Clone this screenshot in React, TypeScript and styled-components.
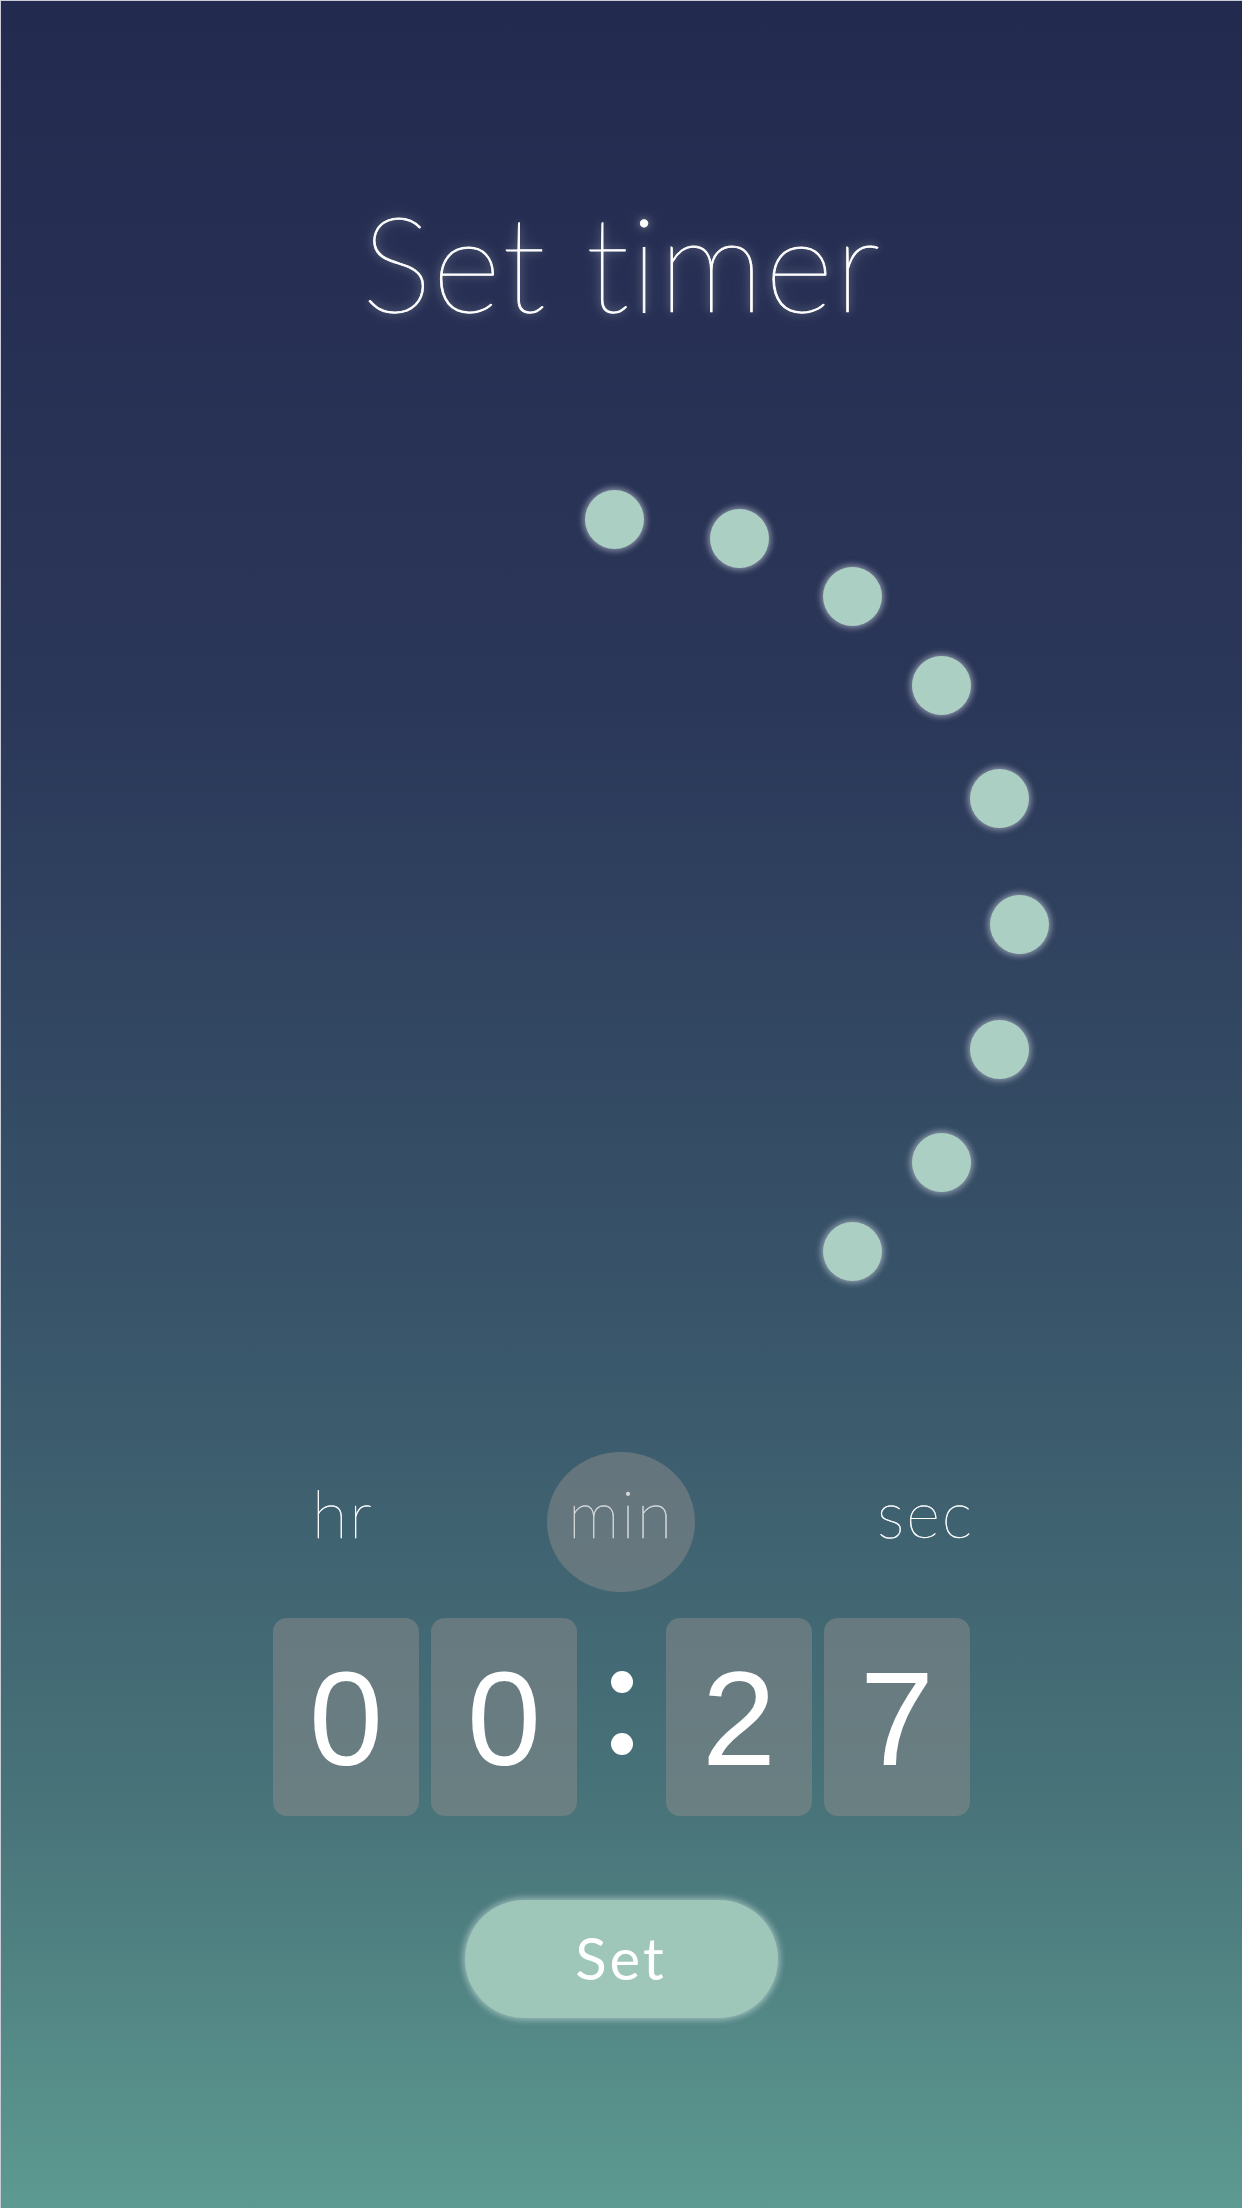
import React from "react";
import styled, { createGlobalStyle } from "styled-components";

const Global = createGlobalStyle`
  html, body { margin: 0; padding: 0; }
  body { background: #232a4f; }
  * { box-sizing: border-box; }
`;

const Page = styled.div`
  width: 1242px;
  height: 2208px;
  overflow: hidden;
  display: flex;
  flex-direction: column;
  align-items: stretch;
  padding-top: 193px;
  border-top: 1px solid #c9ccd6;
  border-left: 1px solid #c9ccd6;
  background: linear-gradient(
    to bottom,
    #232a4f 0px,
    #2b3759 700px,
    #385469 1300px,
    #487379 1800px,
    #5d9a91 2208px
  );
`;

const Title = styled.h1`
  margin: 0;
  height: 133px;
  font-family: "Lato", "Noto Sans", sans-serif;
  font-weight: 100;
  font-size: 133px;
  line-height: 1;
  color: #ffffff;
  text-align: center;
  letter-spacing: 1px;
  -webkit-text-stroke: 0.9px #ffffff;
  text-shadow: 0 0 8px rgba(255, 255, 255, 0.6), 0 0 20px rgba(255, 255, 255, 0.35);
`;

const Dial = styled.div`
  position: relative;
  height: 1125px;
`;

const Dot = styled.span`
  position: absolute;
  width: 59px;
  height: 59px;
  margin: -29.5px 0 0 -29.5px;
  border-radius: 50%;
  background: #abcfc3;
  box-shadow: 0 0 6px 2px rgba(235, 240, 245, 0.5);
`;

const LabelsRow = styled.div`
  display: grid;
  grid-template-columns: 235px 148px 279px;
  padding-left: 311px;
  height: 140px;
  align-items: center;
`;

const Label = styled.div<{ $align: "left" | "center" | "right"; $active?: boolean }>`
  font-family: "Lato", "Noto Sans", sans-serif;
  font-weight: 100;
  font-size: 65px;
  line-height: 1;
  color: ${(p) => (p.$active ? "#d6dadc" : "#ffffff")};
  -webkit-text-stroke: 0.5px ${(p) => (p.$active ? "#d6dadc" : "#ffffff")};
  text-align: ${(p) => p.$align};
  letter-spacing: 2px;
  padding-bottom: 18px;
  ${(p) =>
    p.$active
      ? `
    height: 140px;
    border-radius: 50%;
    background: rgba(140, 140, 140, 0.5);
    display: flex;
    align-items: center;
    justify-content: center;
  `
      : ""}
`;

const DigitsRow = styled.div`
  margin-top: 26px;
  display: flex;
  justify-content: center;
  height: 198px;
`;

const Pair = styled.div`
  display: flex;
  gap: 12px;
`;

const DigitBox = styled.div`
  width: 146px;
  height: 198px;
  border-radius: 14px;
  background: rgba(140, 140, 140, 0.5);
  display: flex;
  align-items: center;
  justify-content: center;
  padding-top: 4px;
  font-family: "Liberation Sans", Arial, sans-serif;
  font-size: 133px;
  line-height: 1;
  color: #ffffff;
`;

const Colon = styled.div`
  width: 89px;
  display: flex;
  flex-direction: column;
  align-items: center;
  justify-content: center;
  gap: 40px;
  padding-bottom: 8px;
`;

const ColonDot = styled.span`
  width: 22px;
  height: 22px;
  border-radius: 50%;
  background: #ffffff;
`;

const SetButton = styled.button`
  align-self: center;
  margin-top: 84px;
  margin-left: -1px;
  width: 313px;
  height: 118px;
  border: none;
  border-radius: 59px;
  background: #9ec6b9;
  box-shadow: 0 0 6px 2px rgba(215, 232, 226, 0.55);
  font-family: "Lato", "Noto Sans", sans-serif;
  font-weight: 400;
  font-size: 58px;
  letter-spacing: 3px;
  color: #ffffff;
  display: flex;
  align-items: center;
  justify-content: center;
  padding: 0 0 4px 0;
`;

const CX = 613;
const CY = 597;
const R = 405;
const angles = [-90, -72, -54, -36, -18, 0, 18, 36, 54];

export default function App() {
  return (
    <>
      <Global />
      <Page>
        <Title>Set timer</Title>
        <Dial>
          {angles.map((a) => {
            const rad = (a * Math.PI) / 180;
            return (
              <Dot
                key={a}
                style={{ left: CX + R * Math.cos(rad), top: CY + R * Math.sin(rad) }}
              />
            );
          })}
        </Dial>
        <LabelsRow>
          <Label $align="left">hr</Label>
          <Label $align="center" $active>
            min
          </Label>
          <Label $align="right">sec</Label>
        </LabelsRow>
        <DigitsRow>
          <Pair>
            <DigitBox>0</DigitBox>
            <DigitBox>0</DigitBox>
          </Pair>
          <Colon>
            <ColonDot />
            <ColonDot />
          </Colon>
          <Pair>
            <DigitBox>2</DigitBox>
            <DigitBox>7</DigitBox>
          </Pair>
        </DigitsRow>
        <SetButton>Set</SetButton>
      </Page>
    </>
  );
}
